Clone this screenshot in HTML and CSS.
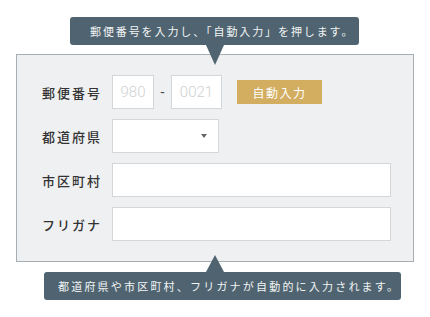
FILE: index.html
```html
<!DOCTYPE html>
<html lang="ja">
<head>
  <meta charset="UTF-8">
  <meta name="viewport" content="width=device-width, initial-scale=1.0">
  <title>住所自動入力</title>
  <link rel="stylesheet" href="styles.css">
</head>
<body>
  <div class="page">
    <div class="tip tip-top">郵便番号を入力し、「自動入力」を押します。</div>

    <div class="form-box">
      <div class="row">
        <span class="label">郵便番号</span>
        <input class="field zip1" type="text" placeholder="980">
        <span class="dash">-</span>
        <input class="field zip2" type="text" placeholder="0021">
        <button class="auto-btn">自動入力</button>
      </div>
      <div class="row">
        <span class="label">都道府県</span>
        <div class="field select">
          <span class="caret"></span>
        </div>
      </div>
      <div class="row">
        <span class="label">市区町村</span>
        <input class="field wide" type="text">
      </div>
      <div class="row">
        <span class="label">フリガナ</span>
        <input class="field wide" type="text">
      </div>
    </div>

    <div class="tip tip-bottom">都道府県や市区町村、フリガナが自動的に入力されます。</div>
  </div>
</body>
</html>
```

FILE: styles.css
```css
body {
  margin: 0;
  background: #fff;
  font-family: "Noto Sans CJK JP", "Noto Sans", sans-serif;
}

.page {
  width: 430px;
  padding-top: 17px;
}

/* speech bubbles */
.tip {
  position: relative;
  height: 28px;
  box-sizing: border-box;
  background-color: #4f6470;
  color: #f2f4f5;
  border-radius: 3px;
  font-size: 11px;
  line-height: 28px;
  white-space: nowrap;
}

.tip::after {
  content: "";
  position: absolute;
  width: 0;
  height: 0;
  border-left: 9px solid transparent;
  border-right: 9px solid transparent;
}

.tip-top {
  width: 289px;
  margin-left: 70px;
  padding-left: 20px;
  letter-spacing: 1.9px;
}

.tip-top::after {
  top: 28px;
  left: 136px;
  border-top: 20px solid #4f6470;
}

.tip-bottom {
  width: 357px;
  margin-left: 44px;
  margin-top: 10px;
  padding-left: 14px;
  letter-spacing: 2.2px;
}

.tip-bottom::after {
  bottom: 28px;
  left: 162px;
  border-bottom: 17px solid #4f6470;
}

/* form panel */
.form-box {
  margin-left: 16px;
  margin-top: 9px;
  padding: 20px 0 20px 25px;
  width: 371px;
  background-color: #eff0f2;
  border: 1px solid #a7aeb3;
  display: flex;
  flex-direction: column;
  gap: 10px;
}

.row {
  display: flex;
  align-items: center;
  height: 34px;
}

.label {
  width: 70px;
  font-size: 13px;
  font-weight: 500;
  letter-spacing: 2px;
  color: #333;
}

.field {
  height: 34px;
  box-sizing: border-box;
  border: 1px solid #d3d7da;
  background: #fff;
  font-family: Roboto, "Noto Sans", sans-serif;
  font-size: 15px;
  font-weight: 300;
  padding: 0;
  outline: none;
}

.field::placeholder {
  color: #cfd2d4;
}

.zip1 {
  width: 42px;
  text-align: center;
}

.zip2 {
  width: 51px;
  text-align: center;
}

.dash {
  width: 17px;
  text-align: center;
  font-family: Roboto, sans-serif;
  font-size: 14px;
  color: #444;
}

.auto-btn {
  margin-left: 15px;
  width: 85px;
  height: 24px;
  border: none;
  background-color: #d3ad60;
  color: #fff;
  font-family: "Noto Sans CJK JP", sans-serif;
  font-size: 12px;
  letter-spacing: 1.5px;
  padding: 0;
}

.select {
  width: 107px;
  display: flex;
  align-items: center;
  justify-content: flex-end;
  padding-right: 11px;
}

.caret {
  width: 0;
  height: 0;
  border-left: 3.5px solid transparent;
  border-right: 3.5px solid transparent;
  border-top: 4px solid #666;
}

.wide {
  width: 279px;
}
```
